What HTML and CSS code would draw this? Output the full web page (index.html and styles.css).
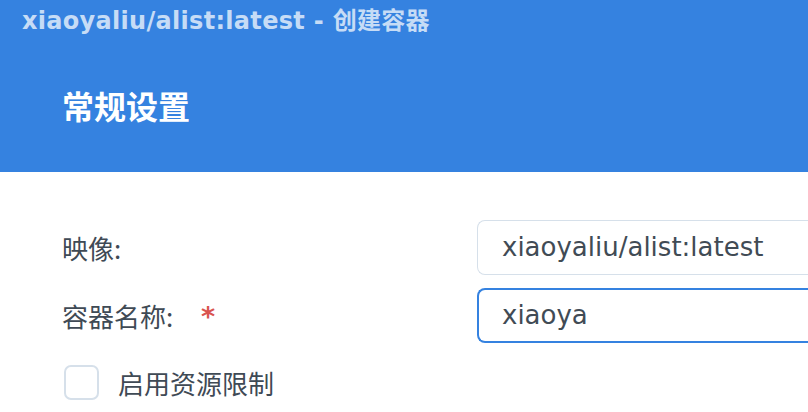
FILE: index.html
```html
<!DOCTYPE html>
<html lang="zh-CN">
<head>
  <meta charset="UTF-8">
  <title>xiaoyaliu/alist:latest - 创建容器</title>
  <link rel="stylesheet" href="styles.css">
</head>
<body>
  <div class="header">
    <div class="window-title">xiaoyaliu/alist:latest - 创建容器</div>
    <h1 class="step-title">常规设置</h1>
  </div>
  <div class="form">
    <div class="row">
      <label class="label">映像:</label>
      <div class="field">xiaoyaliu/alist:latest</div>
    </div>
    <div class="row">
      <label class="label">容器名称: <span class="required">*</span></label>
      <div class="field active">xiaoya</div>
    </div>
    <div class="check-row">
      <span class="checkbox"></span>
      <span class="check-label">启用资源限制</span>
    </div>
  </div>
</body>
</html>
```

FILE: styles.css
```css
body {
  margin: 0;
  background: #fff;
  font-family: "DejaVu Sans", "Noto Sans CJK SC", sans-serif;
  overflow: hidden;
}

.header {
  background-color: #3582e0;
  height: 172px;
  box-sizing: border-box;
  padding: 5px 0 0 22px;
}

.window-title {
  color: #c6dcf6;
  font-weight: bold;
  font-size: 24px;
  line-height: 32px;
  letter-spacing: 0.3px;
}

.step-title {
  margin: 48px 0 0 40px;
  color: #fff;
  font-family: "Noto Sans CJK SC", sans-serif;
  font-weight: bold;
  font-size: 32px;
  line-height: 40px;
}

.form {
  padding: 48px 0 0 62px;
}

.row {
  display: flex;
  align-items: center;
  margin-bottom: 13px;
}

.label {
  width: 415px;
  color: #3f4a55;
  font-family: "Noto Sans CJK SC", sans-serif;
  font-size: 26px;
}

.required {
  display: inline-block;
  color: #d9534f;
  margin-left: 22px;
  font-family: "DejaVu Sans", sans-serif;
  font-weight: bold;
  font-size: 27px;
  vertical-align: 1px;
}

.field {
  flex: 1;
  height: 55px;
  box-sizing: border-box;
  border: 1px solid #d6e0ea;
  border-right: none;
  border-radius: 8px 0 0 8px;
  padding-left: 24px;
  line-height: 52px;
  font-size: 26px;
  color: #414b55;
}

.field.active {
  border: 2px solid #3582e0;
  border-right: none;
  padding-left: 23px;
  line-height: 51px;
}

.check-row {
  display: flex;
  align-items: center;
  margin-top: 21px;
}

.checkbox {
  width: 35px;
  height: 35px;
  box-sizing: border-box;
  border: 2px solid #d6e0ea;
  border-radius: 7px;
  margin: 0 19px 0 2px;
}

.check-label {
  color: #3f4a55;
  font-family: "Noto Sans CJK SC", sans-serif;
  font-size: 26px;
}
```
